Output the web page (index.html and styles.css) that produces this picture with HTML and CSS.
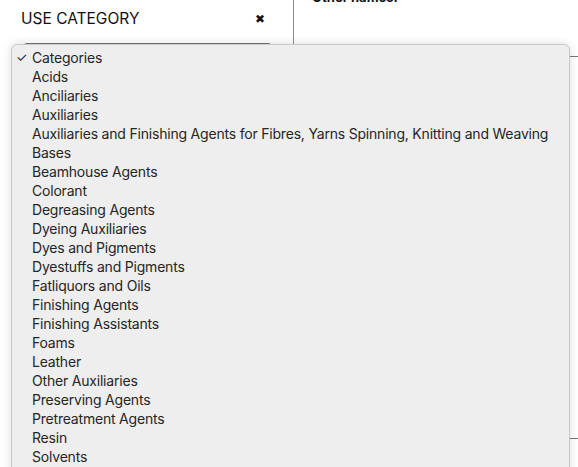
FILE: index.html
```html
<!DOCTYPE html>
<html>
  <head>
    <title>Use category</title>
    <link rel="stylesheet" href="styles.css">
  </head>
  <body>
    <div class="page">
      <div class="panel-left">
        <div class="panel-head">
          <h3 class="panel-title">USE CATEGORY</h3>
          <span class="panel-close">&#10006;</span>
        </div>
        <div class="select-box"></div>
      </div>
      <div class="panel-right">
        <div class="other-names">Other names:</div>
        <div class="rule rule-top"></div>
        <div class="rule rule-bottom"></div>
      </div>
    </div>

    <div class="menu">
      <div class="menu-item selected">Categories</div>
      <div class="menu-item">Acids</div>
      <div class="menu-item">Anciliaries</div>
      <div class="menu-item">Auxiliaries</div>
      <div class="menu-item">Auxiliaries and Finishing Agents for Fibres, Yarns Spinning, Knitting and Weaving</div>
      <div class="menu-item">Bases</div>
      <div class="menu-item">Beamhouse Agents</div>
      <div class="menu-item">Colorant</div>
      <div class="menu-item">Degreasing Agents</div>
      <div class="menu-item">Dyeing Auxiliaries</div>
      <div class="menu-item">Dyes and Pigments</div>
      <div class="menu-item">Dyestuffs and Pigments</div>
      <div class="menu-item">Fatliquors and Oils</div>
      <div class="menu-item">Finishing Agents</div>
      <div class="menu-item">Finishing Assistants</div>
      <div class="menu-item">Foams</div>
      <div class="menu-item">Leather</div>
      <div class="menu-item">Other Auxiliaries</div>
      <div class="menu-item">Preserving Agents</div>
      <div class="menu-item">Pretreatment Agents</div>
      <div class="menu-item">Resin</div>
      <div class="menu-item">Solvents</div>
    </div>
  </body>
</html>
```

FILE: styles.css
```css
html, body {
  margin: 0;
  height: 467px;
  overflow: hidden;
  background: #fff;
  font-family: Inter, "Liberation Sans", sans-serif;
}
.page {
  display: flex;
  width: 578px;
  height: 467px;
}
.panel-left {
  width: 294px;
  border-right: 1px solid #8a8a8a;
  padding-left: 21px;
  box-sizing: border-box;
}
.panel-head {
  display: flex;
  align-items: center;
  width: 244px;
  justify-content: space-between;
  padding-top: 8px;
  height: 20px;
}
.panel-title {
  margin: 0;
  font-size: 15.5px;
  font-weight: normal;
  color: #111;
}
.panel-close {
  font-size: 12px;
  color: #111;
  font-weight: bold;
  font-family: "DejaVu Sans", sans-serif;
  padding-top: 2px;
}
.select-box {
  margin-top: 15px;
  margin-left: 1px;
  width: 249px;
  height: 30px;
  border: 1px solid #777;
  border-radius: 5px;
}
.panel-right {
  flex: 1;
  padding-left: 18px;
}
.other-names {
  margin-top: -11px;
  font-size: 13px;
  font-weight: bold;
  color: #111;
}
.rule {
  height: 1px;
  background: #777;
  margin-left: -18px;
}
.rule-top {
  margin-top: 51px;
}
.rule-bottom {
  margin-top: 381px;
}
.menu {
  position: absolute;
  left: 11px;
  top: 44px;
  width: 559px;
  height: 440px;
  overflow: hidden;
  background: #eeeeee;
  border: 1px solid #c9c9c9;
  border-radius: 6px;
  box-shadow: 0 0 10px rgba(0, 0, 0, 0.14);
  padding-top: 3px;
  box-sizing: border-box;
}
.menu-item {
  height: 19px;
  line-height: 19px;
  padding-left: 20px;
  font-size: 14px;
  letter-spacing: -0.2px;
  color: #262626;
  white-space: nowrap;
}
.menu-item.selected {
  position: relative;
}
.menu-item.selected::before {
  content: "\2713";
  position: absolute;
  left: 4px;
  font-size: 13px;
  color: #262626;
}
```
